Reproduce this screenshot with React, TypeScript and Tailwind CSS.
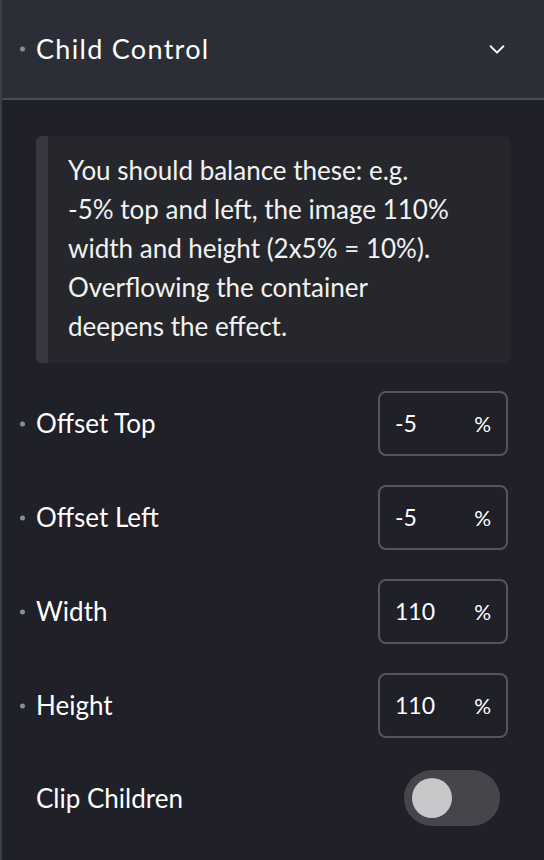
import React, { useState } from 'react'

interface FieldRow {
  label: string
  value: string
  unit: string
}

const fields: FieldRow[] = [
  { label: 'Offset Top', value: '-5', unit: '%' },
  { label: 'Offset Left', value: '-5', unit: '%' },
  { label: 'Width', value: '110', unit: '%' },
  { label: 'Height', value: '110', unit: '%' },
]

function Dot() {
  return <span className="absolute left-[18px] top-1/2 -translate-y-1/2 w-[5px] h-[5px] rounded-full bg-[#8c8e95]" />
}

export default function App() {
  const [clip, setClip] = useState(false)

  return (
    <div
      className="w-[544px] h-[860px] bg-[#1f2028] border-l-2 border-[#3b3d44] text-white overflow-hidden"
      style={{ fontFamily: 'Lato, "Noto Sans", sans-serif' }}
    >
      {/* Header */}
      <div className="relative h-[100px] bg-[#2c2e37] border-b-2 border-[#4b4d55] flex items-center pl-[34px] pr-[36px]">
        <Dot />
        <span className="text-[27px] tracking-[1.3px] flex-1">Child Control</span>
        <svg className="w-[22px] h-[22px] text-white" viewBox="0 0 24 24" fill="none" stroke="currentColor" strokeWidth={2} strokeLinecap="round" strokeLinejoin="round">
          <path d="M5 9l7 7 7-7" />
        </svg>
      </div>

      {/* Note */}
      <div className="pl-[34px] pr-[34px] pt-[36px]">
        <div className="flex rounded-md overflow-hidden bg-[#26272c]">
          <div className="w-[12px] bg-[#37383e]" />
          <p className="pl-[20px] pr-4 pt-[15px] pb-[17px] text-[26px] leading-[39px] text-[#f2f2f2]">
            You should balance these: e.g.
            <br />
            -5% top and left, the image 110%
            <br />
            width and height (2x5% = 10%).
            <br />
            Overflowing the container
            <br />
            deepens the effect.
          </p>
        </div>
      </div>

      {/* Fields */}
      <div className="pt-[28px] flex flex-col gap-[29px]">
        {fields.map((f) => (
          <div key={f.label} className="relative flex items-center justify-between pl-[34px] pr-[36px]">
            <Dot />
            <span className="text-[26px]">{f.label}</span>
            <div className="w-[130px] h-[65px] rounded-lg border-2 border-[#55565c] flex items-center justify-between pl-[15px] pr-[15px]">
              <span className="text-[23px]">{f.value}</span>
              <span className="text-[21px]">{f.unit}</span>
            </div>
          </div>
        ))}

        {/* Clip Children */}
        <div className="flex items-center justify-between pl-[34px] pr-[44px] mt-[3px]">
          <span className="text-[26px]">Clip Children</span>
          <button
            onClick={() => setClip(!clip)}
            className={`w-[96px] h-[56px] rounded-full flex items-center px-[8px] ${clip ? 'bg-[#4f7cff] justify-end' : 'bg-[#45464c] justify-start'}`}
          >
            <span className="w-[40px] h-[40px] rounded-full bg-[#c8c8ca]" />
          </button>
        </div>
      </div>
    </div>
  )
}
